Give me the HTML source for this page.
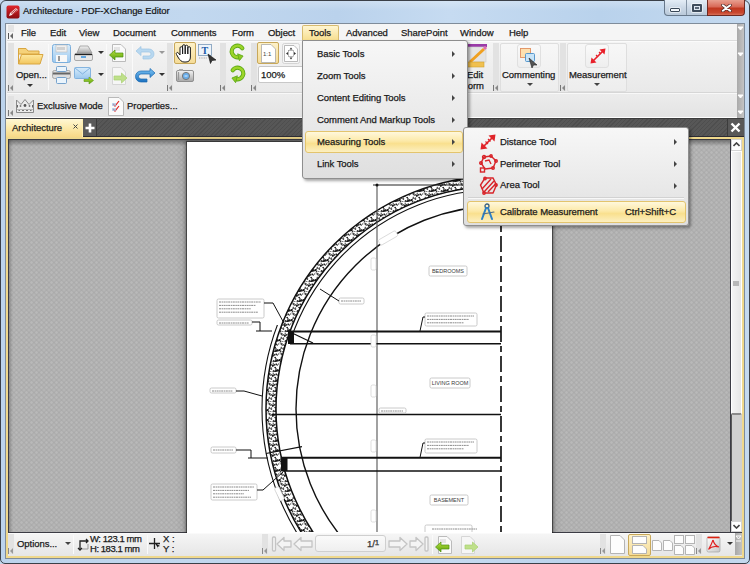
<!DOCTYPE html>
<html><head><meta charset="utf-8">
<style>
*{margin:0;padding:0;box-sizing:border-box}
html,body{width:750px;height:564px;overflow:hidden;background:#c4d8ee;font-family:"Liberation Sans",sans-serif;color:#1a1a1a}
.a{position:absolute}
.t{position:absolute;font-size:9.5px;letter-spacing:-0.05px;-webkit-text-stroke:0.25px #1a1a1a;white-space:nowrap;line-height:12px;color:#1a1a1a}
.menu{top:27px}
.grip{position:absolute;width:6px;height:7px}
.sep{position:absolute;width:1px;background:#d2d2d2;border-right:1px solid #fafafa}
.gcol{position:absolute;width:6px;background:#e2e2e2}
.mi{position:absolute;left:15px;font-size:10px;letter-spacing:-0.2px;white-space:nowrap;color:#1a1a1a}
.arr{position:absolute;width:0;height:0;border-top:3px solid transparent;border-bottom:3px solid transparent;border-left:3px solid #444}
</style></head><body>
<!-- window frame -->
<div class="a" style="left:0;top:0;width:750px;height:564px;border:1px solid #3b4048;border-radius:6px 6px 5px 5px;background:linear-gradient(90deg,#bcd3ec 0%,#c2d8ef 25%,#bad2ec 45%,#c6dbf1 60%,#b9d2ec 80%,#c4d9ef 100%)"></div>
<div class="a" style="left:1px;top:1px;width:748px;height:10px;border-radius:5px 5px 0 0;background:linear-gradient(rgba(255,255,255,.25),rgba(255,255,255,0))"></div>
<!-- app icon -->
<svg class="a" style="left:6px;top:5px" width="14" height="14" viewBox="0 0 14 14">
<defs><linearGradient id="ic" x1="0" y1="0" x2="0" y2="1"><stop offset="0" stop-color="#e0262c"/><stop offset="1" stop-color="#8a0b10"/></linearGradient></defs>
<rect x="0.5" y="0.5" width="13" height="13" rx="2" fill="url(#ic)"/>
<path d="M3 11 L4 8 L10 3 L12 5 L6 10 Z" fill="#fff" opacity=".9"/>
<path d="M5 8.5 L10.5 4 M6 9.5 L11.3 5" stroke="#b01018" stroke-width=".8"/>
</svg>
<div class="t" style="left:23px;top:5px;color:#151515;-webkit-text-stroke:0.2px #151515">Architecture - PDF-XChange Editor</div>
<!-- caption buttons -->
<div class="a" style="left:664px;top:0;width:44px;height:16px;border:1px solid #66778a;border-top:none;border-radius:0 0 0 4px;background:linear-gradient(#e4edf6,#cbd8e6 50%,#b9c9da)"></div>
<div class="a" style="left:686px;top:0;width:1px;height:15px;background:#8595a6"></div>
<div class="a" style="left:707px;top:0;width:38px;height:16px;border:1px solid #6e2a22;border-top:none;border-radius:0 0 4px 0;background:linear-gradient(#e8a090,#d86a58 45%,#c03820 55%,#c84830 85%,#d87058)"></div>
<div class="a" style="left:670px;top:8px;width:10px;height:4px;border:1px solid #3a4858;background:#f4f8fc;border-radius:1px;box-shadow:0 0 0 1px rgba(255,255,255,.5)"></div>
<div class="a" style="left:692px;top:4px;width:10px;height:8px;border:2px solid #3e4c5c;border-radius:1px;background:#dde6f0;box-shadow:0 0 0 1px rgba(255,255,255,.55)"></div><div class="a" style="left:695px;top:7px;width:4px;height:2px;background:#5a6878"></div>
<svg class="a" style="left:721px;top:4px" width="11" height="8" viewBox="0 0 11 8"><path d="M1.8 1.2 L9.2 6.8 M9.2 1.2 L1.8 6.8" stroke="#4a2a28" stroke-width="3.2" stroke-linecap="round"/><path d="M1.8 1.2 L9.2 6.8 M9.2 1.2 L1.8 6.8" stroke="#fff" stroke-width="1.9" stroke-linecap="round"/></svg>

<!-- inner client border -->
<div class="a" style="left:5px;top:23px;width:740px;height:536px;background:#f0f0f0;border:1px solid #7f8c9a"></div>
<!-- menubar -->
<div class="a" style="left:7px;top:24px;width:730px;height:17px;background:#f5f5f5;border-bottom:1px solid #dcdcdc"></div>
<div class="gcol" style="left:8px;top:25px;height:7px;background:#e4e4e4"></div>
<svg class="a" style="left:8px;top:33px" width="6" height="6"><path d="M0.5 0 V6" stroke="#555" stroke-width="1"/><path d="M5 0 L2 3 L5 6 Z" fill="#666"/></svg>
<div class="t menu" style="left:21px">File</div>
<div class="t menu" style="left:50px">Edit</div>
<div class="t menu" style="left:79px">View</div>
<div class="t menu" style="left:113px">Document</div>
<div class="t menu" style="left:171px">Comments</div>
<div class="t menu" style="left:232px">Form</div>
<div class="t menu" style="left:268px">Object</div>
<div class="a" style="left:302px;top:25px;width:37px;height:15px;border:1px solid #d7bb6e;border-bottom:none;border-radius:2px 2px 0 0;background:linear-gradient(#fff6d2,#f7de8f)"></div>
<div class="t menu" style="left:309px">Tools</div>
<div class="t menu" style="left:346px">Advanced</div>
<div class="t menu" style="left:401px">SharePoint</div>
<div class="t menu" style="left:460px">Window</div>
<div class="t menu" style="left:509px">Help</div>

<!-- toolbar row 1 -->
<div class="a" style="left:7px;top:41px;width:730px;height:52px;background:linear-gradient(#f4f4f4,#e9e9e9);border-top:1px solid #fbfbfb;border-bottom:1px solid #d6d6d6"></div>
<!-- row 2 -->
<div class="a" style="left:7px;top:93px;width:730px;height:25px;background:linear-gradient(#ececec,#e3e3e3);border-top:1px solid #f8f8f8;border-bottom:1px solid #fdfdfd"></div>
<!-- right scroll strip -->
<div class="a" style="left:737px;top:24px;width:7px;height:94px;background:linear-gradient(90deg,#a9a9a9,#c4c4c4)"></div>
<svg class="a" style="left:737px;top:25px" width="7" height="92"><g fill="#fff"><path d="M1 2 H6 M1 2 L3.5 5 L6 2" stroke="#fff" stroke-width="1"/><path d="M1 28 H6 M1 28 L3.5 31 L6 28" stroke="#fff" stroke-width="1"/><path d="M1 70 H6 M1 70 L3.5 73 L6 70" stroke="#fff" stroke-width="1"/><path d="M1 86 H6 M1 86 L3.5 89 L6 86" stroke="#fff" stroke-width="1"/></g></svg>

<!-- grips / separators row1 -->
<div class="gcol" style="left:8px;top:43px;height:48px"></div>
<svg class="a" style="left:8px;top:85px" width="6" height="6"><path d="M0.5 0 V6" stroke="#777"/><path d="M5 0 L2 3 L5 6 Z" fill="#888"/></svg>
<div class="sep" style="left:48px;top:44px;height:46px"></div>
<div class="sep" style="left:106px;top:44px;height:46px"></div>
<div class="sep" style="left:132px;top:44px;height:46px"></div>
<div class="gcol" style="left:167px;top:43px;height:48px"></div>
<svg class="a" style="left:167px;top:85px" width="6" height="6"><path d="M0.5 0 V6" stroke="#777"/><path d="M5 0 L2 3 L5 6 Z" fill="#888"/></svg>
<div class="gcol" style="left:220px;top:43px;height:48px"></div>
<svg class="a" style="left:220px;top:85px" width="6" height="6"><path d="M0.5 0 V6" stroke="#777"/><path d="M5 0 L2 3 L5 6 Z" fill="#888"/></svg>
<div class="gcol" style="left:251px;top:43px;height:48px"></div>
<svg class="a" style="left:251px;top:85px" width="6" height="6"><path d="M0.5 0 V6" stroke="#777"/><path d="M5 0 L2 3 L5 6 Z" fill="#888"/></svg>
<div class="gcol" style="left:493px;top:43px;height:48px"></div>
<svg class="a" style="left:493px;top:85px" width="6" height="6"><path d="M0.5 0 V6" stroke="#777"/><path d="M5 0 L2 3 L5 6 Z" fill="#888"/></svg>
<div class="gcol" style="left:560px;top:43px;height:48px"></div>
<svg class="a" style="left:560px;top:85px" width="6" height="6"><path d="M0.5 0 V6" stroke="#777"/><path d="M5 0 L2 3 L5 6 Z" fill="#888"/></svg>
<!-- Commenting / Measurement panels -->
<div class="a" style="left:500px;top:43px;width:59px;height:49px;border:1px solid #dedede;border-radius:2px;background:linear-gradient(#f7f7f7,#ededed)"></div>
<div class="a" style="left:567px;top:43px;width:60px;height:49px;border:1px solid #dedede;border-radius:2px;background:linear-gradient(#f7f7f7,#ededed)"></div>
<div class="a" style="left:517px;top:44px;width:24px;height:24px;border:1px solid #e0e0e0;border-radius:3px;background:linear-gradient(#fafafa,#eeeeee)"></div>
<div class="a" style="left:585px;top:44px;width:24px;height:24px;border:1px solid #e0e0e0;border-radius:3px;background:linear-gradient(#fafafa,#eeeeee)"></div>
<div class="t" style="left:502px;top:69px">Commenting</div>
<div class="t" style="left:569px;top:69px">Measurement</div>
<div class="a" style="left:527px;top:83px;border-left:3px solid transparent;border-right:3px solid transparent;border-top:3px solid #444"></div>
<div class="a" style="left:594px;top:83px;border-left:3px solid transparent;border-right:3px solid transparent;border-top:3px solid #444"></div>
<div class="t" style="left:467px;top:69px">Edit</div>
<div class="t" style="left:462px;top:80px">Form</div>
<!-- Open label -->
<div class="t" style="left:16px;top:69px">Open...</div>
<div class="a" style="left:27px;top:84px;border-left:3px solid transparent;border-right:3px solid transparent;border-top:3px solid #333"></div>
<!-- dropdown arrows -->
<div class="a" style="left:98px;top:51px;border-left:3px solid transparent;border-right:3px solid transparent;border-top:3px solid #333"></div>
<div class="a" style="left:98px;top:73px;border-left:3px solid transparent;border-right:3px solid transparent;border-top:3px solid #333"></div>
<div class="a" style="left:159px;top:51px;border-left:3px solid transparent;border-right:3px solid transparent;border-top:3px solid #999"></div>
<div class="a" style="left:159px;top:73px;border-left:3px solid transparent;border-right:3px solid transparent;border-top:3px solid #333"></div>
<!-- hand highlighted -->
<div class="a" style="left:174px;top:42px;width:22px;height:22px;border:1px solid #c8a85a;border-radius:2px;background:linear-gradient(#fdf1c8,#f5dc98)"></div>
<!-- 1:1 highlighted -->
<div class="a" style="left:257px;top:42px;width:22px;height:22px;border:1px solid #c8a85a;border-radius:2px;background:linear-gradient(#fdf1c8,#f5dc98)"></div>
<!-- zoom combo -->
<div class="a" style="left:258px;top:66px;width:50px;height:17px;border:1px solid #c8c8c8;border-radius:2px;background:#fff"></div>
<div class="t" style="left:261px;top:69px">100%</div>

<!-- row 2 -->
<div class="gcol" style="left:8px;top:96px;height:13px"></div>
<svg class="a" style="left:8px;top:110px" width="6" height="6"><path d="M0.5 0 V6" stroke="#777"/><path d="M5 0 L2 3 L5 6 Z" fill="#888"/></svg>
<div class="t" style="left:37px;top:100px">Exclusive Mode</div>
<div class="t" style="left:127px;top:100px">Properties...</div>
<!-- tab bar -->
<div class="a" style="left:6px;top:118px;width:738px;height:19px;background:#575757;background-image:repeating-linear-gradient(135deg,rgba(0,0,0,.10) 0 1px,transparent 1px 3px);border-top:1px solid #3c3c3c;border-bottom:1px solid #2c2c34"></div>
<div class="a" style="left:6px;top:119px;width:77px;height:18px;background:linear-gradient(#fff7d4,#fce9aa 50%,#f7d887);border-right:1px solid #fff0b0"></div>
<div class="t" style="left:12px;top:122px">Architecture</div>
<svg class="a" style="left:72px;top:123px" width="7" height="7"><path d="M1.5 1.5 L5.5 5.5 M5.5 1.5 L1.5 5.5" stroke="#444" stroke-width="1"/></svg>
<div class="a" style="left:83px;top:119px;width:14px;height:17px;background:#5a5a5a;border-right:1px solid #3c3c3c"></div>
<svg class="a" style="left:84px;top:122px" width="12" height="12"><path d="M6 1.5 V10.5 M1.5 6 H10.5" stroke="#fff" stroke-width="2.6"/></svg>
<div class="a" style="left:727px;top:119px;width:17px;height:17px;background:#585858;border-left:1px solid #3c3c3c"></div>
<svg class="a" style="left:730px;top:122px" width="11" height="11"><path d="M1.5 1.5 L9.5 9.5 M9.5 1.5 L1.5 9.5" stroke="#fff" stroke-width="2.4"/></svg>

<!-- document pane yellow frame -->
<div class="a" style="left:6px;top:137px;width:738px;height:421px;border:2px solid #efd88c"></div>
<div class="a" style="left:8px;top:139px;width:734px;height:394px;background:#3c3c44"></div>
<div class="a" id="docbg" style="left:9px;top:140px;width:721px;height:392px;background-color:#ababab;background-image:radial-gradient(circle,rgba(255,255,255,.16) 0.9px,transparent 1.6px),radial-gradient(circle,rgba(255,255,255,.16) 0.9px,transparent 1.6px);background-size:5px 5px,5px 5px;background-position:0 0,2.5px 2.5px"></div>
<div class="a" style="left:9px;top:140px;width:721px;height:6px;background:linear-gradient(rgba(50,50,50,.5),rgba(50,50,50,0))"></div>
<div class="a" style="left:9px;top:140px;width:4px;height:392px;background:linear-gradient(90deg,rgba(50,50,50,.3),rgba(50,50,50,0))"></div>
<!-- page shadow -->
<div class="a" style="left:187px;top:142px;width:365px;height:392px;background:#fff;box-shadow:0 0 0 1px rgba(30,30,30,.55),0 0 3px 1px rgba(30,30,30,.5),0 0 8px 2px rgba(60,60,60,.25)"></div>
<svg class="a" style="left:187px;top:142px" width="365" height="390" viewBox="0 0 365 390">
<rect width="365" height="390" fill="#fff"/>
<defs><pattern id="speck" patternUnits="userSpaceOnUse" width="12" height="10"><rect width="12" height="10" fill="#fff"/><rect x="7.5" y="7.4" width="1.6" height="1.4" fill="#111"/><rect x="8.9" y="9.2" width="0.7" height="1.0" fill="#111"/><rect x="11.3" y="6.5" width="1.7" height="0.7" fill="#111"/><rect x="5.6" y="2.5" width="1.3" height="1.1" fill="#111"/><rect x="0.2" y="2.2" width="1.0" height="1.4" fill="#111"/><rect x="9.2" y="1.6" width="1.6" height="0.7" fill="#111"/><rect x="7.4" y="1.3" width="0.7" height="1.4" fill="#111"/><rect x="2.5" y="2.2" width="1.8" height="1.4" fill="#111"/><rect x="3.5" y="9.6" width="1.3" height="1.2" fill="#111"/><rect x="2.5" y="9.4" width="1.5" height="1.5" fill="#111"/><rect x="10.7" y="3.0" width="1.1" height="0.7" fill="#111"/><rect x="1.7" y="0.7" width="1.0" height="1.1" fill="#111"/><rect x="0.0" y="6.8" width="1.1" height="0.9" fill="#111"/><rect x="9.8" y="4.8" width="1.0" height="1.0" fill="#111"/><rect x="8.5" y="0.6" width="1.8" height="0.6" fill="#111"/><rect x="9.0" y="8.4" width="0.7" height="1.3" fill="#111"/><rect x="4.4" y="5.8" width="0.7" height="0.6" fill="#111"/><rect x="2.2" y="9.6" width="0.9" height="1.3" fill="#111"/><rect x="11.2" y="9.4" width="1.1" height="0.9" fill="#111"/><rect x="6.3" y="7.8" width="0.8" height="1.3" fill="#111"/><rect x="9.6" y="8.6" width="0.7" height="1.5" fill="#111"/><rect x="1.1" y="3.4" width="1.4" height="1.4" fill="#111"/><rect x="4.1" y="9.2" width="1.3" height="0.9" fill="#111"/><rect x="3.8" y="1.8" width="0.8" height="0.7" fill="#111"/><rect x="8.3" y="10.0" width="0.9" height="0.6" fill="#111"/><rect x="11.8" y="5.3" width="1.1" height="0.8" fill="#111"/><rect x="7.1" y="8.3" width="1.2" height="1.0" fill="#111"/><rect x="0.7" y="9.2" width="0.7" height="1.0" fill="#111"/><rect x="10.1" y="1.3" width="1.5" height="1.5" fill="#111"/><rect x="7.6" y="7.9" width="0.8" height="1.0" fill="#111"/><rect x="1.8" y="8.4" width="1.0" height="1.0" fill="#111"/><rect x="12.0" y="8.5" width="1.8" height="1.0" fill="#111"/><rect x="5.9" y="7.3" width="1.2" height="0.9" fill="#111"/><rect x="4.8" y="1.5" width="1.1" height="1.5" fill="#111"/><rect x="11.5" y="6.3" width="1.2" height="0.9" fill="#111"/><rect x="1.1" y="2.7" width="1.6" height="1.4" fill="#111"/><rect x="4.3" y="7.9" width="1.6" height="1.2" fill="#111"/><rect x="8.0" y="7.6" width="1.1" height="1.2" fill="#111"/><rect x="3.4" y="4.9" width="1.5" height="1.2" fill="#111"/><rect x="3.5" y="9.5" width="1.4" height="1.1" fill="#111"/><rect x="0.1" y="5.5" width="1.0" height="1.2" fill="#111"/><rect x="5.6" y="8.2" width="1.4" height="1.3" fill="#111"/><rect x="4.2" y="6.4" width="1.5" height="1.3" fill="#111"/><rect x="4.2" y="8.4" width="1.7" height="1.2" fill="#111"/><rect x="11.7" y="9.6" width="1.3" height="1.1" fill="#111"/><rect x="2.0" y="8.4" width="1.7" height="1.0" fill="#111"/><rect x="8.3" y="7.2" width="1.5" height="0.8" fill="#111"/><rect x="9.4" y="5.8" width="1.4" height="1.0" fill="#111"/></pattern></defs><circle cx="312" cy="267" r="228" fill="none" stroke="#111" stroke-width="11.5"/><circle cx="312" cy="267" r="228" fill="none" stroke="url(#speck)" stroke-width="8.5"/><clipPath id="cu"><rect x="0" y="0" width="365" height="189"/></clipPath>
<circle cx="312" cy="267" r="219.5" fill="none" stroke="#111" stroke-width="1.1" clip-path="url(#cu)"/>
<clipPath id="cl"><rect x="0" y="183" width="365" height="210"/></clipPath>
<circle cx="312" cy="267" r="237" fill="none" stroke="#111" stroke-width="1.1" clip-path="url(#cl)"/>
<circle cx="312" cy="267" r="203" fill="none" stroke="#111" stroke-width="1.4"/>
<path d="M190 43 V390" stroke="#555" stroke-width="1.1"/>
<path d="M186 43 H330" stroke="#222" stroke-width="1.2"/>
<circle cx="190" cy="43" r="1.5" fill="#111"/>
<path d="M314 40 V390" stroke="#222" stroke-width="1.8" stroke-dasharray="16 4 6 4" stroke-dashoffset="6"/>
<path d="M103 189.5 H314" stroke="#111" stroke-width="2.0"/>
<path d="M103 201.7 H314" stroke="#111" stroke-width="1.5"/>
<path d="M85 272.5 H314" stroke="#111" stroke-width="1.5"/>
<path d="M94 315.7 H314" stroke="#111" stroke-width="2.0"/>
<path d="M96 329 H314" stroke="#111" stroke-width="1.5"/>
<rect x="101" y="189" width="6" height="13" fill="#111"/>
<rect x="94" y="316" width="6.5" height="13" fill="#111"/>
<path d="M103 190 L126 201" stroke="#111" stroke-width="1.2"/>
<path d="M79 311.5 L115 304.7" stroke="#111" stroke-width="1.2"/>
<rect x="242" y="124" width="38" height="10" rx="1.5" fill="#fff" stroke="#bdbdbd" stroke-width="0.8"/><text x="261.0" y="130.98" font-size="5.5" text-anchor="middle" fill="#3a3a3a" font-family="Liberation Sans">BEDROOMS</text>
<rect x="243" y="236" width="40" height="10" rx="1.5" fill="#fff" stroke="#bdbdbd" stroke-width="0.8"/><text x="263.0" y="242.98" font-size="5.5" text-anchor="middle" fill="#3a3a3a" font-family="Liberation Sans">LIVING ROOM</text>
<rect x="243" y="353" width="38" height="10" rx="1.5" fill="#fff" stroke="#bdbdbd" stroke-width="0.8"/><text x="262.0" y="359.98" font-size="5.5" text-anchor="middle" fill="#3a3a3a" font-family="Liberation Sans">BASEMENT</text>
<rect x="238" y="171" width="52" height="13" rx="1.5" fill="#fff" stroke="#bdbdbd" stroke-width="0.8"/><path d="M240 174.0 H287" stroke="#8a8a8a" stroke-width="1" stroke-dasharray="2 0.6 1.5 0.5"/><path d="M240 177.4 H282" stroke="#8a8a8a" stroke-width="1" stroke-dasharray="2 0.6 1.5 0.5"/><path d="M240 180.8 H277" stroke="#8a8a8a" stroke-width="1" stroke-dasharray="2 0.6 1.5 0.5"/>
<path d="M238 175 H236 L233 189" stroke="#111" stroke-width="1" fill="none"/>
<rect x="238" y="297" width="52" height="14" rx="1.5" fill="#fff" stroke="#bdbdbd" stroke-width="0.8"/><path d="M240 300.0 H287" stroke="#8a8a8a" stroke-width="1" stroke-dasharray="2 0.6 1.5 0.5"/><path d="M240 303.4 H282" stroke="#8a8a8a" stroke-width="1" stroke-dasharray="2 0.6 1.5 0.5"/><path d="M240 306.8 H277" stroke="#8a8a8a" stroke-width="1" stroke-dasharray="2 0.6 1.5 0.5"/>
<path d="M238 301 H236 L233 315.5" stroke="#111" stroke-width="1" fill="none"/>
<rect x="30" y="157" width="47" height="19" rx="1.5" fill="#fff" stroke="#bdbdbd" stroke-width="0.8"/><path d="M32 160.0 H74" stroke="#8a8a8a" stroke-width="1" stroke-dasharray="2 0.6 1.5 0.5"/><path d="M32 163.4 H69" stroke="#8a8a8a" stroke-width="1" stroke-dasharray="2 0.6 1.5 0.5"/><path d="M32 166.8 H64" stroke="#8a8a8a" stroke-width="1" stroke-dasharray="2 0.6 1.5 0.5"/><path d="M32 170.2 H71" stroke="#8a8a8a" stroke-width="1" stroke-dasharray="2 0.6 1.5 0.5"/>
<path d="M77 161 H86 L98 183" stroke="#111" stroke-width="1" fill="none"/>
<rect x="30" y="178" width="35" height="5" rx="1.5" fill="#fff" stroke="#bdbdbd" stroke-width="0.8"/><path d="M32 181.0 H62" stroke="#8a8a8a" stroke-width="1" stroke-dasharray="2 0.6 1.5 0.5"/>
<path d="M65 180 H73 V189 M69 189 H85" stroke="#111" stroke-width="1" fill="none"/>
<rect x="23" y="246" width="26" height="5" rx="1.5" fill="#fff" stroke="#bdbdbd" stroke-width="0.8"/><path d="M25 249.0 H46" stroke="#8a8a8a" stroke-width="1" stroke-dasharray="2 0.6 1.5 0.5"/>
<path d="M49 249 H57 L75 254" stroke="#111" stroke-width="1" fill="none"/>
<rect x="24" y="305" width="25" height="6" rx="1.5" fill="#fff" stroke="#bdbdbd" stroke-width="0.8"/><path d="M26 308.0 H46" stroke="#8a8a8a" stroke-width="1" stroke-dasharray="2 0.6 1.5 0.5"/>
<path d="M49 308 H64 V316 M61 316 H81" stroke="#111" stroke-width="1" fill="none"/>
<rect x="24" y="342" width="46" height="16" rx="1.5" fill="#fff" stroke="#bdbdbd" stroke-width="0.8"/><path d="M26 345.0 H67" stroke="#8a8a8a" stroke-width="1" stroke-dasharray="2 0.6 1.5 0.5"/><path d="M26 348.4 H62" stroke="#8a8a8a" stroke-width="1" stroke-dasharray="2 0.6 1.5 0.5"/><path d="M26 351.8 H57" stroke="#8a8a8a" stroke-width="1" stroke-dasharray="2 0.6 1.5 0.5"/><path d="M26 355.2 H64" stroke="#8a8a8a" stroke-width="1" stroke-dasharray="2 0.6 1.5 0.5"/>
<path d="M70 348 H76 L96 330" stroke="#111" stroke-width="1" fill="none"/>
<rect x="152" y="156" width="25" height="6" rx="1.5" fill="#fff" stroke="#bdbdbd" stroke-width="0.8"/><path d="M154 159.0 H174" stroke="#8a8a8a" stroke-width="1" stroke-dasharray="2 0.6 1.5 0.5"/>
<path d="M152 159 L133 147" stroke="#111" stroke-width="1" fill="none"/>
<rect x="192" y="266" width="27" height="5" rx="1.5" fill="#fff" stroke="#bdbdbd" stroke-width="0.8"/><path d="M194 269.0 H216" stroke="#8a8a8a" stroke-width="1" stroke-dasharray="2 0.6 1.5 0.5"/>
<rect x="238" y="383" width="47" height="9" rx="1.5" fill="#fff" stroke="#bdbdbd" stroke-width="0.8"/><path d="M245 387.0 H290" stroke="#8a8a8a" stroke-width="1" stroke-dasharray="2 0.6 1.5 0.5"/>
<rect x="184" y="116" width="5" height="12" rx="1.5" fill="#fff" stroke="#d0d0d0" stroke-width="0.7"/>
<rect x="184" y="193" width="5" height="12" rx="1.5" fill="#fff" stroke="#d0d0d0" stroke-width="0.7"/>
<rect x="184" y="243" width="5" height="12" rx="1.5" fill="#fff" stroke="#d0d0d0" stroke-width="0.7"/>
<rect x="184" y="298" width="5" height="12" rx="1.5" fill="#fff" stroke="#d0d0d0" stroke-width="0.7"/>
<rect x="184" y="368" width="5" height="12" rx="1.5" fill="#fff" stroke="#d0d0d0" stroke-width="0.7"/>
<rect x="191" y="93" width="20" height="6" rx="1.5" fill="#fff" stroke="#d0d0d0" stroke-width="0.7" transform="rotate(-30 201 96)"/>
<rect x="90" y="345" width="5" height="14" rx="1.5" fill="#fff" stroke="#d0d0d0" stroke-width="0.7" transform="rotate(-25 92 352)"/>
</svg><!-- vertical scrollbar -->
<div class="a" style="left:731px;top:139px;width:11px;height:393px;background:#d0d0d0;border-left:1px solid #5a5a5a"></div>
<div class="a" style="left:731px;top:139px;width:11px;height:12px;background:#fff;border:1px solid #d4d4d4"></div>
<svg class="a" style="left:733px;top:142px" width="7" height="5"><path d="M0.5 4 L3.5 1 L6.5 4" stroke="#444" stroke-width="1.6" fill="none"/></svg>
<div class="a" style="left:731px;top:151px;width:11px;height:264px;background:linear-gradient(90deg,#f4f4f4,#e6e6e6);border:1px solid #fff;border-bottom:2px solid #8a8a8a;border-radius:0 0 2px 2px"></div>
<div class="a" style="left:733px;top:281px;width:6px;height:5px;background:#b8b8b8"></div>
<div class="a" style="left:731px;top:521px;width:11px;height:11px;background:#fff;border:1px solid #d4d4d4"></div>
<svg class="a" style="left:733px;top:524px" width="7" height="5"><path d="M0.5 1 L3.5 4 L6.5 1" stroke="#444" stroke-width="1.6" fill="none"/></svg>

<!-- status bar -->
<div class="a" style="left:8px;top:533px;width:734px;height:23px;background:linear-gradient(#f5f5f5,#e6e6e6);border-top:1px solid #fafafa"></div>
<div class="a" style="left:735px;top:533px;width:7px;height:22px;background:linear-gradient(90deg,#a8a8a8,#c2c2c2)"></div>
<svg class="a" style="left:735px;top:535px" width="7" height="8"><path d="M1 1 H6 M1 1 L3.5 4 L6 1 M1 6 H6" stroke="#fff" stroke-width="1" fill="none"/></svg>
<div class="gcol" style="left:8px;top:534px;height:20px"></div>
<svg class="a" style="left:8px;top:548px" width="6" height="6"><path d="M0.5 0 V6" stroke="#888"/><path d="M5 0 L2 3 L5 6 Z" fill="#999"/></svg>
<div class="t" style="left:17px;top:538px">Options...</div>
<div class="a" style="left:65px;top:542px;border-left:3px solid transparent;border-right:3px solid transparent;border-top:3px solid #444"></div>
<div class="sep" style="left:73px;top:535px;height:19px"></div>
<svg class="a" style="left:77px;top:537px" width="12" height="14"><path d="M3 13 V4 H10 M9 2 L11 4 L9 6" stroke="#222" stroke-width="1.3" fill="none"/><path d="M1 11 L3 13 L5 11" stroke="#222" stroke-width="1.3" fill="none"/><path d="M5 12 H11 V7" stroke="#999" stroke-width="1" fill="none"/></svg>
<div class="t" style="left:90px;top:534px;line-height:10px;letter-spacing:-0.45px">W: 123.1 mm<br>H: 183.1 mm</div>
<div class="sep" style="left:147px;top:535px;height:19px"></div>
<svg class="a" style="left:149px;top:537px" width="12" height="14"><path d="M5.5 1 V12 M0 6.5 H11" stroke="#222" stroke-width="1.3"/><path d="M6 6 L10 13 L8 10 L11 9 Z" fill="#111"/></svg>
<div class="t" style="left:163px;top:534px;line-height:10px">X :<br>Y :</div>

<div class="gcol" style="left:262px;top:534px;height:20px"></div>
<svg class="a" style="left:262px;top:548px" width="6" height="6"><path d="M0.5 0 V6" stroke="#888"/><path d="M5 0 L2 3 L5 6 Z" fill="#999"/></svg>
<!-- nav icons faded -->
<svg class="a" style="left:271px;top:535px" width="160" height="18" viewBox="0 0 160 18">
<g fill="#f4f4f4" stroke="#c4c4c4" stroke-width="1.3" stroke-linejoin="round">
<rect x="1.5" y="2" width="3" height="14" rx="1"/>
<path d="M6 9 L13 2.5 V6 H20 V12 H13 V15.5 Z"/>
<path d="M23 9 L30 2.5 V6 H41 V12 H30 V15.5 Z"/>
<path d="M136 9 L129 2.5 V6 H118 V12 H129 V15.5 Z"/>
<path d="M152 9 L145 2.5 V6 H139 V12 H145 V15.5 Z"/>
<rect x="154" y="2" width="3" height="14" rx="1"/>
</g></svg>
<div class="a" style="left:315px;top:535px;width:71px;height:17px;border:1px solid #cfcfcf;border-radius:3px;background:linear-gradient(#fafafa,#efefef)"></div>
<div class="t" style="left:367px;top:538px;color:#444">1/<span style="font-size:8px;position:relative;top:-2px">1</span></div>
<div class="sep" style="left:432px;top:535px;height:19px"></div>

<div class="gcol" style="left:600px;top:534px;height:20px"></div>
<svg class="a" style="left:600px;top:548px" width="6" height="6"><path d="M0.5 0 V6" stroke="#888"/><path d="M5 0 L2 3 L5 6 Z" fill="#999"/></svg>
<div class="a" style="left:628px;top:534px;width:23px;height:22px;border:1px solid #c8a85a;border-radius:2px;background:linear-gradient(#fdf1c8,#f5dc98)"></div>
<svg class="a" style="left:608px;top:535px" width="88" height="20" viewBox="0 0 88 20">
<g fill="#fdfdfd" stroke="#b4b4b4" stroke-width="1">
<path d="M2.5 0.5 H12 L16.5 5 V18.5 H2.5 Z"/>
<rect x="24.5" y="1.5" width="14" height="7"/>
<path d="M24.5 10.5 H35 L38.5 14 V18.5 H24.5 Z"/>
<path d="M44.5 5.5 H51 L53.5 8 V15.5 H44.5 Z"/>
<path d="M55.5 5.5 H62 L64.5 8 V15.5 H55.5 Z"/>
<rect x="66.5" y="0.5" width="9" height="8"/>
<rect x="77.5" y="0.5" width="9" height="8"/>
<path d="M66.5 10.5 H73 L75.5 13 V19.5 H66.5 Z"/>
<path d="M77.5 10.5 H84 L86.5 13 V19.5 H77.5 Z"/>
</g></svg>
<div class="gcol" style="left:696px;top:534px;height:20px"></div>
<svg class="a" style="left:696px;top:548px" width="6" height="6"><path d="M0.5 0 V6" stroke="#888"/><path d="M5 0 L2 3 L5 6 Z" fill="#999"/></svg>
<svg class="a" style="left:706px;top:536px" width="16" height="17" viewBox="0 0 16 17">
<defs><linearGradient id="pdfg" x1="0" y1="0" x2="1" y2="1"><stop offset="0" stop-color="#fff"/><stop offset="1" stop-color="#c8c8c8"/></linearGradient></defs>
<rect x="1" y="1" width="13" height="15" rx="1.5" fill="url(#pdfg)" stroke="#999" stroke-width=".6"/>
<path d="M1.5 1.5 H13.5" stroke="#d21" stroke-width="1.6"/>
<path d="M7 4 C6 7 4 11 2.5 13.5 M7 4 C8 8 10 10 13 11 M2.5 13.5 C5 10.5 9 10 13 11" stroke="#e02020" stroke-width="1.1" fill="none"/>
</svg>
<div class="a" style="left:727px;top:542px;border-left:3px solid transparent;border-right:3px solid transparent;border-top:3px solid #333"></div>
<svg class="a" style="left:0;top:0" width="750" height="564" viewBox="0 0 750 564">
<defs>
<linearGradient id="fold" x1="0" y1="0" x2="0" y2="1"><stop offset="0" stop-color="#fde9a0"/><stop offset="1" stop-color="#f2c55c"/></linearGradient>
<linearGradient id="lb" x1="0" y1="0" x2="0" y2="1"><stop offset="0" stop-color="#d8ecfb"/><stop offset="1" stop-color="#9cc8ee"/></linearGradient>
<linearGradient id="gr" x1="0" y1="0" x2="0" y2="1"><stop offset="0" stop-color="#b8e03a"/><stop offset="1" stop-color="#5aa010"/></linearGradient>
<linearGradient id="bl" x1="0" y1="0" x2="0" y2="1"><stop offset="0" stop-color="#7cc4f4"/><stop offset="1" stop-color="#1a70c0"/></linearGradient>
<linearGradient id="gry" x1="0" y1="0" x2="0" y2="1"><stop offset="0" stop-color="#f4f4f4"/><stop offset="1" stop-color="#a8a8a8"/></linearGradient>
</defs>
<!-- folder -->
<path d="M18.5 48.5 H26 L28 51 H39 V54 H18.5 Z" fill="#f5d27a" stroke="#d9a640" stroke-width="1"/>
<path d="M18.5 64 L21.5 54.5 H43 L40 64 Z" fill="url(#fold)" stroke="#d9a640" stroke-width="1"/>
<path d="M18.5 53 V64" stroke="#d9a640"/>
<!-- save -->
<rect x="52.5" y="44.5" width="18" height="18" rx="2" fill="url(#lb)" stroke="#7aaedc" stroke-width="1"/>
<rect x="56" y="45" width="11" height="7" fill="#f0f0f0" stroke="#bbb" stroke-width=".6"/>
<path d="M58 47 V50 M60 47 V50 M62 47 V50 M64 47 V50" stroke="#999" stroke-width=".7"/>
<rect x="56" y="55" width="11" height="7" fill="#f8f8f8"/>
<rect x="58" y="56" width="2" height="5" fill="#999"/>
<!-- scanner -->
<path d="M77 53 L80 46 H88 L92 53 Z" fill="url(#gry)" stroke="#999" stroke-width=".8"/>
<rect x="74.5" y="53.5" width="18" height="7" rx="1.5" fill="#e8e8e8" stroke="#999" stroke-width=".8"/>
<path d="M75 54.5 H92" stroke="#222" stroke-width="1.3"/>
<path d="M81 57 H86" stroke="#2a88d8" stroke-width="1.4"/>
<!-- printer -->
<rect x="52.5" y="70.5" width="18" height="8" rx="2" fill="#ddd" stroke="#999" stroke-width=".8"/>
<path d="M53 73.5 H70" stroke="#666" stroke-width="2"/>
<rect x="56.5" y="66.5" width="10" height="5" rx="1" fill="#eaf4fc" stroke="#6a9ac8" stroke-width=".9"/>
<rect x="56.5" y="77.5" width="10" height="6" rx="1" fill="#eaf4fc" stroke="#6a9ac8" stroke-width=".9"/>
<!-- email -->
<rect x="74.5" y="67.5" width="16" height="11" rx="1" fill="url(#lb)" stroke="#7aaedc" stroke-width=".9"/>
<path d="M75 68 L82.5 74 L90 68" stroke="#7aaedc" stroke-width=".9" fill="none"/>
<path d="M84 79.5 H89 V77 L93.5 80.5 L89 84 V81.5 H84 Z" fill="url(#gr)" stroke="#5a9a10" stroke-width=".6"/>
<!-- page back -->
<path d="M112.5 44.5 H121 L125.5 49 V61.5 H112.5 Z" fill="#fafafa" stroke="#bbb" stroke-width="1"/>
<path d="M115 47 V51 M117 47 V51 M119 47 V51" stroke="#bbb" stroke-width=".7"/>
<path d="M109.5 55 L115 50 V53 H123 V57 H115 V60 Z" fill="url(#gr)" stroke="#4a9010" stroke-width=".7"/>
<!-- page fwd faded -->
<path d="M112.5 67.5 H121 L125.5 72 V84.5 H112.5 Z" fill="#f6f6f6" stroke="#d6d6d6" stroke-width="1"/>
<path d="M127 78 L121.5 73 V76 H114 V80 H121.5 V83 Z" fill="#bfe08a" stroke="#a8d070" stroke-width=".7"/>
<!-- undo faded -->
<path d="M136 51 L141 46.5 V49 H149 A5 5 0 0 1 149 59 H143 V56 H149 A2 2 0 0 0 149 52 H141 V55.5 Z" fill="#b8d8f0" stroke="#9cc4e4" stroke-width=".7"/>
<!-- redo -->
<path d="M155 73 L150 68.5 V71 H141 A5.5 5.5 0 0 0 141 82 H147 V79 H141 A2.5 2.5 0 0 1 141 74 H150 V77.5 Z" fill="url(#bl)" stroke="#1a68b0" stroke-width=".7"/>
<!-- hand -->
<path d="M180 55 V48 A1.3 1.3 0 0 1 182.6 48 V54 V46 A1.3 1.3 0 0 1 185.2 46 V54 V46.5 A1.3 1.3 0 0 1 187.8 46.5 V54 V48 A1.3 1.3 0 0 1 190.4 48 V57 C190.4 60 189 62 186 62 H184 C181.5 62 180 60 178.5 58 L176.5 54.5 A1.2 1.2 0 0 1 178.5 53 Z" fill="#fff" stroke="#1a1a1a" stroke-width="1"/>
<!-- select text -->
<rect x="198.5" y="44.5" width="13" height="11" fill="#eef4fa" stroke="#7a9ab8" stroke-width=".8"/>
<text x="201.5" y="54" font-size="10" font-weight="bold" fill="#1a5aa8" font-family="Liberation Serif">T</text>
<path d="M208 54 L216 60 L212 60.5 L210.5 63.5 Z" fill="#333" stroke="#111" stroke-width=".6"/>
<path d="M199 58 H207" stroke="#aaa" stroke-width="1.2" stroke-dasharray="1 .7"/>
<!-- camera -->
<rect x="176.5" y="70.5" width="17" height="11" rx="1.5" fill="url(#gry)" stroke="#888" stroke-width=".9"/>
<rect x="179" y="69" width="4" height="2" fill="#aaa"/>
<circle cx="186" cy="76" r="3.6" fill="#6aaeea" stroke="#777" stroke-width="1"/>
<path d="M184.5 76 H187.5" stroke="#fff" stroke-width=".8"/>
<path d="M178.5 72 V80" stroke="#999" stroke-width="1.2"/>
<!-- rotate ccw (top) -->
<path d="M242.3 48.2 A5.8 5.8 0 1 0 239.0 57.1" fill="none" stroke="#5aa812" stroke-width="4.2" stroke-linecap="round"/><path d="M242.3 48.2 A5.8 5.8 0 1 0 239.0 57.1" fill="none" stroke="#9cd42a" stroke-width="2.6" stroke-linecap="round"/><path d="M243.1 56.0 L239.4 60.7 L237.6 53.8 Z" fill="#8cc824" stroke="#5aa812" stroke-width=".8"/>
<!-- rotate cw -->
<path d="M232.7 70.2 A5.8 5.8 0 1 1 236.0 79.1" fill="none" stroke="#5aa812" stroke-width="4.2" stroke-linecap="round"/><path d="M232.7 70.2 A5.8 5.8 0 1 1 236.0 79.1" fill="none" stroke="#9cd42a" stroke-width="2.6" stroke-linecap="round"/><path d="M231.9 78.0 L235.6 82.7 L237.4 75.8 Z" fill="#8cc824" stroke="#5aa812" stroke-width=".8"/>
<!-- 1:1 -->
<path d="M261.5 44.5 H271 L275.5 49 V62.5 H261.5 Z" fill="#fff" stroke="#aaa" stroke-width=".8"/>
<text x="263" y="56" font-size="6" fill="#444" font-family="Liberation Sans">1:1</text>
<!-- fit -->
<rect x="282.5" y="43.5" width="17" height="20" rx="2" fill="#f6f6f6" stroke="#ccc" stroke-width=".8"/>
<path d="M284.5 45.5 H294 L297.5 49 V61.5 H284.5 Z" fill="#fff" stroke="#aaa" stroke-width=".8"/>
<path d="M291 47.5 L289.5 49.5 H292.5 Z M291 59.5 L289.5 57.5 H292.5 Z M286 53.5 L288 52 V55 Z M296 53.5 L294 52 V55 Z" fill="#333"/>
<rect x="288.5" y="50.5" width="5" height="6" fill="none" stroke="#888" stroke-width=".6"/>
<!-- edit form (partially hidden) -->
<rect x="466" y="44" width="21" height="3" fill="#9a3aa8"/>
<rect x="467" y="47" width="19" height="15" fill="#e4e4e4" stroke="#ccc" stroke-width=".6"/>
<path d="M470 62 L484 49" stroke="#f0a020" stroke-width="3"/>
<path d="M484 49 L486 47" stroke="#e070b0" stroke-width="3"/>
<rect x="466" y="62" width="18" height="5" fill="#f0c050" stroke="#d0a030" stroke-width=".6"/>
<!-- commenting icon -->
<rect x="520.5" y="48.5" width="10" height="9" fill="#fde0b0" stroke="#e09060" stroke-width=".9"/>
<rect x="525.5" y="53.5" width="9" height="8" rx="1" fill="#c8e4f8" stroke="#4a90c8" stroke-width=".9"/>
<path d="M529 58 L537 65 L533.5 65 L532 68 Z" fill="#555" stroke="#222" stroke-width=".6"/>
<!-- measurement icon -->
<path d="M593.5 60.5 L602.5 51.5" stroke="#e8202a" stroke-width="1.6"/>
<path d="M590.5 63.5 L591.5 57.5 L596.5 62.5 Z M605.5 48.5 L604.5 54.5 L599.5 49.5 Z" fill="#e8202a"/>
<path d="M596 55 L598 57 M599 52 L601 54" stroke="#e8202a" stroke-width="1.1"/>
<!-- crown -->
<path d="M16.5 100 L21 104.5 L25 99.5 L29 104.5 L33.5 100 V112.5 H16.5 Z" fill="#ececec" stroke="#8a8a8a" stroke-width="1"/>
<circle cx="25" cy="105.5" r="1.4" fill="#555"/><circle cx="20.5" cy="106" r=".9" fill="#777"/><circle cx="29.5" cy="106" r=".9" fill="#777"/>
<path d="M17.5 105 V107.5 M32.5 105 V107.5" stroke="#666" stroke-width="1"/>
<path d="M17 109.5 H33" stroke="#aaa" stroke-width=".8"/>
<path d="M18.5 110.5 H20 M22 110.5 H24 M26 110.5 H28 M30 110.5 H31.5" stroke="#777" stroke-width="1"/>
<!-- properties -->
<path d="M108.5 97.5 H119 L123.5 102 V115.5 H108.5 Z" fill="#fafafa" stroke="#aaa" stroke-width=".8"/>
<path d="M113 104 L115 106 L119 101 M113 109 L115 111 L119 106" stroke="#e02020" stroke-width="1.2" fill="none"/>
<rect x="112" y="103" width="4" height="3" fill="#9cc4e8" opacity=".7"/><rect x="112" y="108" width="4" height="3" fill="#9cc4e8" opacity=".7"/>
<!-- status bar page back / fwd -->
<path d="M438.5 536.5 H447 L451.5 541 V553.5 H438.5 Z" fill="#fafafa" stroke="#bbb" stroke-width="1"/>
<path d="M441 539 V543 M443 539 V543 M445 539 V543" stroke="#bbb" stroke-width=".7"/>
<path d="M435.5 547 L441 542 V545 H449 V549 H441 V552 Z" fill="url(#gr)" stroke="#4a9010" stroke-width=".7"/>
<path d="M461.5 536.5 H470 L474.5 541 V553.5 H461.5 Z" fill="#f6f6f6" stroke="#d6d6d6" stroke-width="1"/>
<path d="M478 547 L472.5 542 V545 H465 V549 H472.5 V552 Z" fill="#bfe08a" stroke="#a8d070" stroke-width=".7"/>
</svg>
<!-- Tools menu -->
<div class="a" style="left:302px;top:40px;width:166px;height:139px;border:1px solid #8e8e8e;border-radius:0 3px 3px 3px;background:linear-gradient(#f7f7f7,#e9e9e9 60%,#dfdfdf);box-shadow:2px 2px 3px rgba(0,0,0,.35)"></div>
<div class="a" style="left:305px;top:131px;width:158px;height:22px;border:1px solid #e3c46d;border-radius:3px;background:linear-gradient(#fff8dc,#fce9a8 45%,#f9e08e 58%,#fcefc0)"></div>
<div class="t" style="left:317px;top:48px">Basic Tools</div>
<div class="t" style="left:317px;top:70px">Zoom Tools</div>
<div class="t" style="left:317px;top:92px">Content Editing Tools</div>
<div class="t" style="left:317px;top:114px">Comment And Markup Tools</div>
<div class="t" style="left:317px;top:136px">Measuring Tools</div>
<div class="t" style="left:317px;top:158px">Link Tools</div>
<div class="arr" style="left:452px;top:51px"></div>
<div class="arr" style="left:452px;top:73px"></div>
<div class="arr" style="left:452px;top:95px"></div>
<div class="arr" style="left:452px;top:117px"></div>
<div class="arr" style="left:452px;top:139px"></div>
<div class="arr" style="left:452px;top:161px"></div>

<!-- Measuring submenu -->
<div class="a" style="left:463px;top:127px;width:226px;height:99px;border:1px solid #8e8e8e;border-radius:3px;background:linear-gradient(#f7f7f7,#e9e9e9 60%,#dfdfdf);box-shadow:2px 2px 3px rgba(0,0,0,.35)"></div>
<div class="a" style="left:468px;top:197px;width:216px;height:2px;border-top:1px solid #d2d2d2;border-bottom:1px solid #f8f8f8"></div>
<div class="a" style="left:467px;top:201px;width:219px;height:22px;border:1px solid #e3c46d;border-radius:3px;background:linear-gradient(#fff8dc,#fce9a8 45%,#f9e08e 58%,#fcefc0)"></div>
<div class="t" style="left:500px;top:136px">Distance Tool</div>
<div class="t" style="left:500px;top:158px">Perimeter Tool</div>
<div class="t" style="left:500px;top:179px">Area Tool</div>
<div class="t" style="left:500px;top:206px">Calibrate Measurement</div>
<div class="t" style="left:625px;top:206px">Ctrl+Shift+C</div>
<div class="arr" style="left:674px;top:139px"></div>
<div class="arr" style="left:674px;top:161px"></div>
<div class="arr" style="left:674px;top:183px"></div>
<!-- submenu icons -->
<svg class="a" style="left:479px;top:133px" width="18" height="18" viewBox="0 0 18 18">
<path d="M4.5 13.5 L13.5 4.5" stroke="#e0242a" stroke-width="1.7"/><path d="M1.5 16.5 L2.5 9.5 L8.5 15.5 Z M16.5 1.5 L15.5 8.5 L9.5 2.5 Z" fill="#e0242a"/><path d="M6.5 8.5 L9 11 M9 6 L11.5 8.5" stroke="#e0242a" stroke-width="1.2"/></svg>
<svg class="a" style="left:479px;top:154px" width="19" height="19" viewBox="0 0 19 19">
<g stroke="#d8242a" stroke-width="1.4" fill="none"><path d="M5 3 L12 2 L17 7 L14 14 L6 15 L2 9 Z"/><circle cx="5" cy="3" r="1.5"/><circle cx="12" cy="2" r="1.2"/><circle cx="17" cy="7" r="1.3"/><circle cx="14" cy="14" r="1.3"/><circle cx="2" cy="9" r="1.3"/><rect x="1.5" y="14" width="4" height="4"/><path d="M6 7 L10 6 L12 10"/></g></svg>
<svg class="a" style="left:479px;top:176px" width="19" height="19" viewBox="0 0 19 19">
<g stroke="#d8242a" stroke-width="1.4" fill="none"><path d="M6 2 L14 2 L17.5 9 L14 17 L5 17 L1.5 9 Z"/><path d="M3 13 L12 3 M5 16 L15 5 M9 16 L16.5 8"/><circle cx="6" cy="2.5" r="1.2"/><circle cx="17" cy="9" r="1.2"/><circle cx="5" cy="17" r="1.2"/></g></svg>
<svg class="a" style="left:480px;top:203px" width="17" height="18" viewBox="0 0 17 18">
<g fill="none" stroke-linecap="round"><circle cx="7" cy="3" r="2" stroke="#3a6080" stroke-width="1.3"/><path d="M6 5 L2 16" stroke="#2a80c8" stroke-width="2"/><path d="M8 5 L12 16" stroke="#2a80c8" stroke-width="2"/><path d="M3 11 L14 9" stroke="#4a6a8a" stroke-width="1.1"/></g></svg>
</body></html>
